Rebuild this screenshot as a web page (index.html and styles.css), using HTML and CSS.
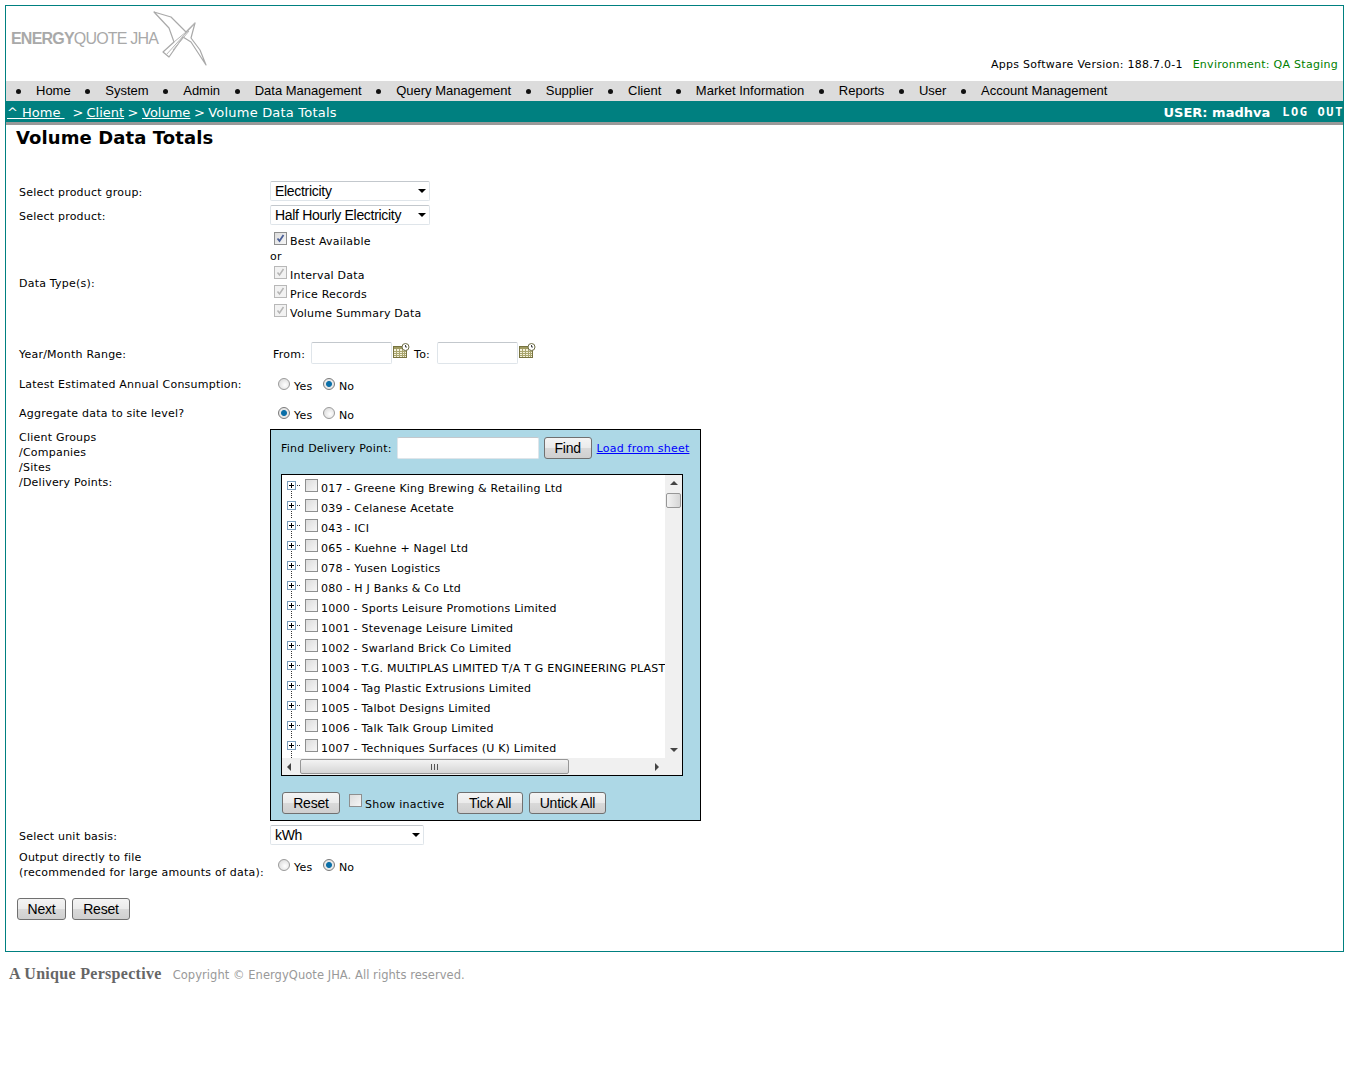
FILE: index.html
```html
<!DOCTYPE html>
<html lang="en">
<head>
<meta charset="utf-8">
<title>Volume Data Totals</title>
<link rel="stylesheet" href="styles.css">
</head>
<body>
<svg class="defs" width="0" height="0" aria-hidden="true">
  <symbol id="cal" viewBox="0 0 17 16">
    <rect x="0.500" y="3.500" width="13" height="11" fill="#f4f1dc" stroke="#77733f"/>
    <rect x="1" y="4" width="12" height="2" fill="#a09b62"/>
    <path d="M1 8.500h12M1 10.500h12M1 12.500h12M3.500 6v8M6.500 6v8M9.500 6v8M11.500 6v8" stroke="#a9a56e" stroke-width="1"/>
    <circle cx="12.500" cy="4" r="3.500" fill="#fff" stroke="#6d6d45"/>
    <path d="M12.500 2v2h1.500" fill="none" stroke="#444"/>
  </symbol>
  <symbol id="plus" viewBox="0 0 13 17">
    <path d="M4.500 0v17" stroke="#333" stroke-dasharray="1 1" fill="none"/>
    <path d="M10 4.500h3" stroke="#333" stroke-dasharray="1 1" fill="none"/>
    <rect x="0.500" y="0.500" width="8" height="8" fill="#fff" stroke="#7b9ebd"/>
    <path d="M2 4.500h5M4.500 2v5" stroke="#000"/>
  </symbol>
</svg>
<div class="frame">
  <header class="top">
    <div class="logo">
      <span class="logo-text"><b>ENERGY</b>QUOTE JHA</span>
      <svg class="bird" width="56" height="56" viewBox="0 0 56 56" aria-hidden="true">
        <path d="M1 1 18 6 33 21 42 12 38 27 47 39 53 54 38 31 30 26 16 46 10 41 21 31 16 17Z" fill="#fff" stroke="#a9a9a9" stroke-width="1.200" stroke-linejoin="round"/>
        <path d="M42 12 13 44M33 21 21 31M36 20 20 39" fill="none" stroke="#b5b5b5" stroke-width="1"/>
      </svg>
    </div>
    <div class="version">Apps Software Version: 188.7.0-1 <span class="env">Environment: QA Staging</span></div>
  </header>
  <nav class="nav">
    <ul>
      <li>Home</li><li>System</li><li>Admin</li><li>Data Management</li><li>Query Management</li><li>Supplier</li><li>Client</li><li>Market Information</li><li>Reports</li><li>User</li><li>Account Management</li>
    </ul>
  </nav>
  <div class="crumbs">
    <div class="trail"><a href="#">^ Home&nbsp;</a><span class="sep1">&gt;</span><a href="#">Client</a><span class="sep">&gt;</span><a href="#">Volume</a><span class="sep">&gt;</span><span class="current">Volume Data Totals</span></div>
    <div class="user"><span class="uname">USER: madhva</span><span class="logout">LOG OUT</span></div>
  </div>
  <main class="main">
    <h1>Volume Data Totals</h1>
    <form class="form">
      <div class="row r-group">
        <label class="lab">Select product group:</label>
        <div class="sel w160"><select><option>Electricity</option></select></div>
      </div>
      <div class="row r-product">
        <label class="lab">Select product:</label>
        <div class="sel w160"><select><option>Half Hourly Electricity</option></select></div>
      </div>
      <div class="row r-types">
        <label class="lab">Data Type(s):</label>
        <div class="types">
          <div class="ck first"><input type="checkbox" class="box on"><span>Best Available</span></div>
          <div class="or">or</div>
          <div class="ck"><input type="checkbox" class="box dis"><span>Interval Data</span></div>
          <div class="ck"><input type="checkbox" class="box dis"><span>Price Records</span></div>
          <div class="ck"><input type="checkbox" class="box dis"><span>Volume Summary Data</span></div>
        </div>
      </div>
      <div class="row r-range">
        <label class="lab">Year/Month Range:</label>
        <div class="range">
          <span>From:</span><input type="text" class="txt w81"><svg class="calicon" width="17" height="16"><use href="#cal"/></svg>
          <span class="to">To:</span><input type="text" class="txt w81"><svg class="calicon" width="17" height="16"><use href="#cal"/></svg>
        </div>
      </div>
      <div class="row r-radio1">
        <label class="lab">Latest Estimated Annual Consumption:</label>
        <div class="radios"><input type="radio" class="rad"><span>Yes</span><input type="radio" class="rad on"><span>No</span></div>
      </div>
      <div class="row r-radio2">
        <label class="lab">Aggregate data to site level?</label>
        <div class="radios"><input type="radio" class="rad on"><span>Yes</span><input type="radio" class="rad"><span>No</span></div>
      </div>
      <div class="row r-panel">
        <label class="lab multi">Client Groups<br>/Companies<br>/Sites<br>/Delivery Points:</label>
        <div class="panel">
          <div class="find">
            <span>Find Delivery Point:</span>
            <input type="text" class="txt w142">
            <button type="button" class="btn b48">Find</button>
            <a href="#">Load from sheet</a>
          </div>
          <div class="tree">
            <div class="tree-top">
              <ul class="list">
                <li><svg width="13" height="17"><use href="#plus"/></svg><input type="checkbox" class="box"><span>017 - Greene King Brewing &amp; Retailing Ltd</span></li>
                <li><svg width="13" height="17"><use href="#plus"/></svg><input type="checkbox" class="box"><span>039 - Celanese Acetate</span></li>
                <li><svg width="13" height="17"><use href="#plus"/></svg><input type="checkbox" class="box"><span>043 - ICI</span></li>
                <li><svg width="13" height="17"><use href="#plus"/></svg><input type="checkbox" class="box"><span>065 - Kuehne + Nagel Ltd</span></li>
                <li><svg width="13" height="17"><use href="#plus"/></svg><input type="checkbox" class="box"><span>078 - Yusen Logistics</span></li>
                <li><svg width="13" height="17"><use href="#plus"/></svg><input type="checkbox" class="box"><span>080 - H J Banks &amp; Co Ltd</span></li>
                <li><svg width="13" height="17"><use href="#plus"/></svg><input type="checkbox" class="box"><span>1000 - Sports Leisure Promotions Limited</span></li>
                <li><svg width="13" height="17"><use href="#plus"/></svg><input type="checkbox" class="box"><span>1001 - Stevenage Leisure Limited</span></li>
                <li><svg width="13" height="17"><use href="#plus"/></svg><input type="checkbox" class="box"><span>1002 - Swarland Brick Co Limited</span></li>
                <li><svg width="13" height="17"><use href="#plus"/></svg><input type="checkbox" class="box"><span>1003 - T.G. MULTIPLAS LIMITED T/A T G ENGINEERING PLASTICS</span></li>
                <li><svg width="13" height="17"><use href="#plus"/></svg><input type="checkbox" class="box"><span>1004 - Tag Plastic Extrusions Limited</span></li>
                <li><svg width="13" height="17"><use href="#plus"/></svg><input type="checkbox" class="box"><span>1005 - Talbot Designs Limited</span></li>
                <li><svg width="13" height="17"><use href="#plus"/></svg><input type="checkbox" class="box"><span>1006 - Talk Talk Group Limited</span></li>
                <li><svg width="13" height="17"><use href="#plus"/></svg><input type="checkbox" class="box"><span>1007 - Techniques Surfaces (U K) Limited</span></li>
              </ul>
              <div class="vbar">
                <i class="ar up"></i>
                <i class="vthumb"></i>
                <i class="ar down"></i>
              </div>
            </div>
            <div class="tree-bottom">
              <div class="hbar">
                <i class="ar left"></i>
                <i class="hthumb"><b class="grip"></b></i>
                <i class="ar right"></i>
              </div>
              <div class="corner"></div>
            </div>
          </div>
          <div class="actions">
            <button type="button" class="btn b58">Reset</button>
            <div class="ck inline"><input type="checkbox" class="box"><span>Show inactive</span></div>
            <button type="button" class="btn b66">Tick All</button>
            <button type="button" class="btn b77">Untick All</button>
          </div>
        </div>
      </div>
      <div class="row r-unit">
        <label class="lab">Select unit basis:</label>
        <div class="sel w154"><select><option>kWh</option></select></div>
      </div>
      <div class="row r-output">
        <label class="lab multi">Output directly to file<br>(recommended for large amounts of data):</label>
        <div class="radios"><input type="radio" class="rad"><span>Yes</span><input type="radio" class="rad on"><span>No</span></div>
      </div>
      <div class="submit">
        <button type="button" class="btn b49">Next</button>
        <button type="button" class="btn b58">Reset</button>
      </div>
    </form>
  </main>
</div>
<footer class="foot"><span class="tag">A Unique Perspective</span><span class="copy">Copyright © EnergyQuote JHA. All rights reserved.</span></footer>
</body>
</html>
```

FILE: styles.css
```css
* { box-sizing: border-box; }
html, body { margin: 0; padding: 0; }
body {
  background: #fff;
  color: #000;
  padding: 5px 5px 0 5px;
  font: 11px/15px "DejaVu Sans", Verdana, sans-serif;
  letter-spacing: 0.220px;
}
.defs { position: absolute; }
ul { list-style: none; margin: 0; padding: 0; }
a { color: #00f; }

.frame { width: 1339px; height: 947px; border: 1px solid #008080; }

.top { height: 75px; display: flex; justify-content: space-between; }
.logo { display: flex; align-items: flex-start; padding: 5px 0 0 5px; }
.logo-text {
  font: 16px/18px "Liberation Sans", Arial, sans-serif;
  color: #a9a9a9;
  margin-top: 19px;
  letter-spacing: -0.800px;
  white-space: nowrap;
}
.logo-text b { font-weight: bold; }
.bird { margin: 0 0 0 -5px; }
.version { align-self: flex-end; padding: 0 5px 9px 0; letter-spacing: 0.270px; }
.env { color: #008000; margin-left: 6px; }

.nav { height: 20px; background: #dcdcdc; font: 13px/20px "Liberation Sans", Arial, sans-serif; letter-spacing: 0; }
.nav ul { display: flex; padding-left: 10px; }
.nav li { display: flex; align-items: center; margin-right: 14.600px; }
.nav li::before {
  content: "";
  width: 5px;
  height: 5px;
  border-radius: 50%;
  background: #111;
  margin-right: 15px;
}

.crumbs {
  height: 24px;
  background: #008080;
  border-bottom: 3px solid #999;
  color: #fff;
  display: flex;
  justify-content: space-between;
  font-size: 13px;
  line-height: 23px;
  letter-spacing: 0;
}
.crumbs a { color: #fff; }
.trail { padding-left: 1px; white-space: nowrap; }
.sep1 { margin: 0 3px 0 8px; }
.sep { margin: 0 3.500px; }
.current { letter-spacing: 0.200px; }
.user { display: flex; align-items: center; padding-top: 2px; }
.uname { font-weight: bold; margin-right: 12px; }
.logout { font: bold 12px/21px "DejaVu Sans Mono", monospace; letter-spacing: 1.600px; margin-right: -1px; }

.main { padding: 0 0 0 10px; }
h1 { margin: 0; font: bold 18px/26px "DejaVu Sans", Verdana, sans-serif; height: 56px; letter-spacing: 0.100px; }
.form { padding-left: 3px; }
.row { display: flex; align-items: center; }
.lab { width: 251px; flex: none; white-space: nowrap; }

.sel { position: relative; flex: none; height: 20px; }
.sel::after {
  content: "";
  position: absolute;
  right: 4px;
  top: 8px;
  border: 4px solid transparent;
  border-top: 4px solid #000;
  border-bottom: 0;
}
.sel select {
  appearance: none;
  width: 100%;
  height: 100%;
  border: 1px solid #dfe5ea;
  border-top-color: #c3c8cd;
  border-radius: 2px;
  background: #fff;
  padding: 0 0 0 4px;
  font: 14px/18px "Liberation Sans", Arial, sans-serif;
  letter-spacing: -0.300px;
  color: #000;
}
.w160 { width: 160px; }
.w154 { width: 154px; }

.r-group { height: 20px; margin-bottom: 4px; }
.r-product { height: 20px; margin-bottom: 6px; }
.r-group .lab, .r-product .lab, .r-unit .lab, .r-range .lab { padding-top: 2px; }
.r-types { height: 90px; margin-bottom: 21px; }
.r-types .lab { padding-top: 14px; }
.types { display: flex; flex-direction: column; }
.ck { display: flex; align-items: flex-start; height: 19px; padding-left: 4px; }
.ck.first { height: 18px; }
.ck span { margin: 3px 0 0 3px; }
.types .box { margin-top: 1px; }
.or { height: 16px; line-height: 15px; }

.box {
  appearance: none;
  margin: 0;
  width: 13px;
  height: 13px;
  flex: none;
  border: 1px solid #8e8f8f;
  background: linear-gradient(135deg, #dcdcdc, #f6f6f6);
}
.box.on {
  background: url("data:image/svg+xml,%3Csvg xmlns='http://www.w3.org/2000/svg' width='11' height='11'%3E%3Cpath d='M2.500 5.500l2 2.500 4-6' fill='none' stroke='%234a5f97' stroke-width='1.800'/%3E%3C/svg%3E") center no-repeat, linear-gradient(135deg, #dcdcdc, #f6f6f6);
}
.box.dis {
  border-color: #b8b8b8;
  background: url("data:image/svg+xml,%3Csvg xmlns='http://www.w3.org/2000/svg' width='11' height='11'%3E%3Cpath d='M2.500 5.500l2 2.500 4-6' fill='none' stroke='%23b5b5b5' stroke-width='1.500'/%3E%3C/svg%3E") center no-repeat, #f2f2f2;
}

.r-range { height: 22px; margin-bottom: 14px; }
.range { display: flex; align-items: flex-start; padding-left: 3px; }
.range span { margin-top: 5px; margin-right: 6px; }
.range .to { margin-left: 4px; margin-right: 7px; }
.calicon { margin: 1px 0 0 1px; flex: none; }
.txt {
  height: 22px;
  border: 1px solid #dfe5ea;
  border-top-color: #c3c8cd;
  border-radius: 2px;
  background: #fff;
  padding: 0;
  flex: none;
}
.w81 { width: 81px; }
.w142 { width: 142px; }

.radios { display: flex; align-items: flex-start; padding-left: 8px; height: 15px; }
.radios span { margin: 1px 10.500px 0 4px; }
.rad {
  appearance: none;
  margin: 0;
  width: 12px;
  height: 12px;
  border-radius: 50%;
  border: 1px solid #9a9a9a;
  background: radial-gradient(circle at 60% 60%, #fff, #d4d4d4);
  flex: none;
}
.rad.on {
  background: radial-gradient(circle, #0b6fa8 0 2.500px, #e8e8e8 3.500px);
  border-color: #7a7a7a;
}
.r-radio1 { height: 15px; margin-bottom: 14px; }
.r-radio2 { height: 15px; margin-bottom: 7px; }
.r-radio1 .lab, .r-radio2 .lab { padding-bottom: 2px; }

.r-panel { align-items: flex-start; margin-bottom: 4px; }
.multi { line-height: 15px; }
.r-panel .lab { padding-top: 1px; }
.panel {
  width: 431px;
  height: 392px;
  border: 1px solid #000;
  background: #add8e6;
  padding: 6px 10px 0 10px;
}
.find { display: flex; align-items: center; height: 24px; white-space: nowrap; }
.find .txt { margin-left: 5px; }
.find .btn { margin-left: 5px; }
.find a { margin-left: 5px; }

.btn {
  height: 22px;
  border: 1px solid #707070;
  border-radius: 3px;
  background: linear-gradient(#f4f4f4, #ebebeb 48%, #d9d9d9 52%, #cfcfcf);
  font: 14px/18px "Liberation Sans", Arial, sans-serif;
  letter-spacing: -0.200px;
  color: #000;
  padding: 0;
  flex: none;
}
.b48 { width: 48px; }
.b49 { width: 49px; }
.b58 { width: 58px; }
.b66 { width: 66px; }
.b77 { width: 77px; }

.tree {
  margin-top: 14px;
  width: 402px;
  height: 302px;
  border: 1px solid #000;
  background: #fff;
  display: flex;
  flex-direction: column;
}
.tree-top { display: flex; height: 283px; }
.list { flex: 1; min-width: 0; overflow: hidden; padding: 4px 0 0 5px; }
.list li { display: flex; align-items: flex-start; height: 20px; white-space: nowrap; }
.list svg { flex: none; margin-top: 2px; }
.list .box { margin: 0 0 0 5px; }
.list span { margin: 2px 0 0 3px; }

.vbar {
  width: 17px;
  flex: none;
  background: #f0f0f0;
  position: relative;
  display: flex;
  flex-direction: column;
  align-items: center;
  padding-top: 6px;
}
.vthumb {
  display: block;
  width: 15px;
  height: 15px;
  margin-top: 8px;
  border: 1px solid #979797;
  border-radius: 2px;
  background: linear-gradient(90deg, #f3f3f3, #d6d6d6);
}
.ar { display: block; width: 0; height: 0; border: 4px solid transparent; }
.ar.up { border-top: 0; border-bottom: 4px solid #444; }
.ar.down { border-bottom: 0; border-top: 4px solid #444; margin-top: auto; margin-bottom: 6px; }
.ar.left { border-left: 0; border-right: 4px solid #444; margin: 0 9px 0 5px; }
.ar.right { border-right: 0; border-left: 4px solid #444; margin: 0 6px 0 auto; }

.tree-bottom { display: flex; height: 17px; }
.hbar { flex: 1; background: #f0f0f0; display: flex; align-items: center; }
.hthumb {
  display: flex;
  align-items: center;
  justify-content: center;
  width: 269px;
  height: 15px;
  border: 1px solid #979797;
  border-radius: 2px;
  background: linear-gradient(#f3f3f3, #d6d6d6);
}
.grip { width: 7px; height: 6px; background: repeating-linear-gradient(90deg, #555 0 1px, transparent 1px 3px); }
.corner { width: 17px; background: #f0f0f0; }

.actions { display: flex; align-items: flex-start; margin-top: 16px; padding-left: 1px; }
.ck.inline { padding: 0; margin-left: 9px; width: 108px; }
.ck.inline .box { margin-top: 2px; }
.ck.inline span { margin: 5px 0 0 3px; white-space: nowrap; }
.actions .b77 { margin-left: 6px; }

.r-unit { height: 20px; margin-bottom: 5px; }
.r-output { height: 30px; }
.r-output .radios { align-self: flex-start; margin-top: 9px; }
.submit { display: flex; gap: 6px; margin: 18px 0 0 -2px; }

.foot { display: flex; align-items: baseline; padding: 12px 0 0 4px; }
.tag { font: bold 16px/20px "Liberation Serif", Georgia, serif; letter-spacing: 0.300px; color: #666; }
.copy { margin-left: 11px; color: #999; font-size: 11.500px; letter-spacing: 0.050px; }
```
